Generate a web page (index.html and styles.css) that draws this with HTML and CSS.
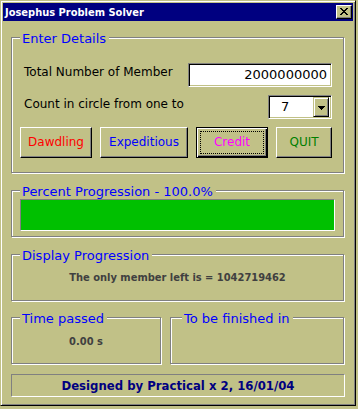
FILE: index.html
```html
<!DOCTYPE html>
<html>
<head>
<meta charset="utf-8">
<title>Josephus Problem Solver</title>
<link rel="stylesheet" href="styles.css">
</head>
<body>
<div class="window">
  <div class="titlebar">
    <span class="title">Josephus Problem Solver</span>
    <span class="close">
      <svg class="close-x" width="8" height="7" viewBox="0 0 8 7" shape-rendering="crispEdges">
        <rect x="0" y="0" width="2" height="1"/><rect x="6" y="0" width="2" height="1"/>
        <rect x="1" y="1" width="2" height="1"/><rect x="5" y="1" width="2" height="1"/>
        <rect x="2" y="2" width="4" height="1"/>
        <rect x="3" y="3" width="2" height="1"/>
        <rect x="2" y="4" width="4" height="1"/>
        <rect x="1" y="5" width="2" height="1"/><rect x="5" y="5" width="2" height="1"/>
        <rect x="0" y="6" width="2" height="1"/><rect x="6" y="6" width="2" height="1"/>
      </svg>
    </span>
  </div>
  <div class="client">
    <div class="group details">
      <span class="legend">Enter Details</span>
      <div class="row">
        <span class="label">Total Number of Member</span>
        <div class="textbox">2000000000</div>
      </div>
      <div class="row">
        <span class="label">Count in circle from one to</span>
        <div class="combo">
          <span class="combo-value">7</span>
          <span class="combo-btn">
            <svg width="7" height="4" viewBox="0 0 7 4" shape-rendering="crispEdges">
              <rect x="0" y="0" width="7" height="1"/><rect x="1" y="1" width="5" height="1"/>
              <rect x="2" y="2" width="3" height="1"/><rect x="3" y="3" width="1" height="1"/>
            </svg>
          </span>
        </div>
      </div>
      <div class="buttons">
        <button class="btn btn-dawdling">Dawdling</button>
        <button class="btn btn-expeditious">Expeditious</button>
        <button class="btn btn-credit">Credit</button>
        <button class="btn btn-quit">QUIT</button>
      </div>
    </div>

    <div class="group progress-group">
      <span class="legend">Percent Progression - 100.0%</span>
      <div class="progress-bar"></div>
    </div>

    <div class="group display-group">
      <span class="legend">Display Progression</span>
      <div class="result">The only member left is = 1042719462</div>
    </div>

    <div class="time-row">
      <div class="group time-group">
        <span class="legend">Time passed</span>
        <div class="result">0.00 s</div>
      </div>
      <div class="group finish-group">
        <span class="legend legend-finish">To be finished in</span>
      </div>
    </div>

    <div class="footer">Designed by Practical x 2, 16/01/04</div>
  </div>
</div>
</body>
</html>
```

FILE: styles.css
```css
* {
  box-sizing: border-box;
}

body {
  margin: 0;
  width: 358px;
  height: 409px;
  overflow: hidden;
  background: #c1c187;
  font-family: "DejaVu Sans", Verdana, sans-serif;
}

.window {
  width: 356px;
  height: 406px;
  padding: 2px;
  background: #c1c187;
  border: 1px solid;
  border-color: #c1c187 #000 #000 #c1c187;
  box-shadow: inset 1px 1px #fff, inset -1px -1px #808080;
  display: flex;
  flex-direction: column;
}

.titlebar {
  height: 18px;
  background: #000080;
  display: flex;
  align-items: center;
  justify-content: space-between;
  padding-left: 2px;
}

.title {
  color: #fff;
  font-family: "DejaVu Sans Condensed", "DejaVu Sans", sans-serif;
  font-stretch: condensed;
  font-weight: bold;
  font-size: 11px;
  line-height: 13px;
  padding-top: 1px;
}

.close {
  width: 16px;
  height: 14px;
  margin-right: 1px;
  background: #c1c187;
  border: 1px solid;
  border-color: #fff #000 #000 #fff;
  box-shadow: inset -1px -1px #808080;
}

.close-x {
  display: block;
  margin: 2px 0 0 3px;
  fill: #000;
}

.client {
  flex: 1;
  display: flex;
  flex-direction: column;
  padding: 16px 9px 0 8px;
}

.group {
  position: relative;
  border: 1px solid #808080;
  box-shadow: inset 1px 1px #fff, 1px 1px #fff;
}

.legend {
  position: absolute;
  left: 8px;
  top: -7px;
  padding: 0 3px 0 2px;
  background: #c1c187;
  color: #0000ff;
  font-size: 13px;
  line-height: 15px;
  white-space: nowrap;
}

.legend-finish {
  left: 11px;
}

.details {
  height: 136px;
  padding: 25px 11px 0 8px;
}

.row {
  display: flex;
  justify-content: space-between;
  align-items: flex-start;
  height: 24px;
  margin-bottom: 8px;
}

.label {
  padding-left: 4px;
  margin-top: 2px;
  font-size: 12px;
  line-height: 14px;
  color: #000;
}

.textbox,
.combo {
  height: 24px;
  background: #fff;
  border: 1px solid;
  border-color: #808080 #fff #fff #808080;
  box-shadow: inset 1px 1px #000, inset -1px -1px #c1c187;
  font-size: 13px;
  line-height: 20px;
  color: #000;
}

.textbox {
  width: 144px;
  padding: 1px 4px 0 0;
  text-align: right;
}

.combo {
  width: 64px;
  display: flex;
  justify-content: space-between;
  padding: 1px 2px 1px 1px;
}

.combo-value {
  padding-left: 11px;
}

.combo-btn {
  width: 16px;
  height: 20px;
  background: #c1c187;
  border: 1px solid;
  border-color: #c1c187 #000 #000 #c1c187;
  box-shadow: inset 1px 1px #fff, inset -1px -1px #808080;
  display: flex;
  align-items: center;
  justify-content: center;
  padding-top: 1px;
}

.combo-btn svg {
  display: block;
  fill: #000;
}

.buttons {
  display: flex;
  gap: 8px;
}

.btn {
  height: 31px;
  padding: 0 0 1px;
  background: #c1c187;
  border: 1px solid;
  border-color: #fff #000 #000 #fff;
  box-shadow: inset -1px -1px #808080;
  font-family: "DejaVu Sans", Verdana, sans-serif;
  font-size: 12px;
  line-height: 14px;
}

.btn-dawdling {
  width: 72px;
  color: #ff0000;
}

.btn-expeditious {
  width: 88px;
  color: #0000ff;
}

.btn-credit {
  width: 72px;
  color: #ff00ff;
  border-color: #000;
  box-shadow: inset 1px 1px #fff, inset -1px -1px #000, inset -2px -2px #808080;
  outline: 1px dotted #000;
  outline-offset: -5px;
}

.btn-quit {
  width: 56px;
  color: #008000;
}

.progress-group {
  margin-top: 17px;
  height: 47px;
  padding: 8px 8px 5px 8px;
}

.progress-bar {
  height: 32px;
  background: #00c000;
  border: 1px solid;
  border-color: #808080 #fff #fff #808080;
}

.display-group {
  margin-top: 17px;
  height: 47px;
  padding-top: 16px;
}

.result {
  text-align: center;
  color: #404040;
  font-family: "DejaVu Sans Condensed", "DejaVu Sans", sans-serif;
  font-stretch: condensed;
  font-weight: bold;
  font-size: 11px;
  line-height: 13px;
}

.time-row {
  margin-top: 16px;
  height: 47px;
  display: flex;
  gap: 9px;
}

.time-group {
  width: 150px;
  padding-top: 17px;
}

.finish-group {
  width: 174px;
}

.footer {
  margin-top: 10px;
  width: 334px;
  height: 23px;
  border: 1px solid;
  border-color: #808080 #fff #fff #808080;
  text-align: center;
  color: #000080;
  font-family: "DejaVu Sans Condensed", "DejaVu Sans", sans-serif;
  font-stretch: condensed;
  font-weight: bold;
  font-size: 13px;
  line-height: 21px;
}
```
